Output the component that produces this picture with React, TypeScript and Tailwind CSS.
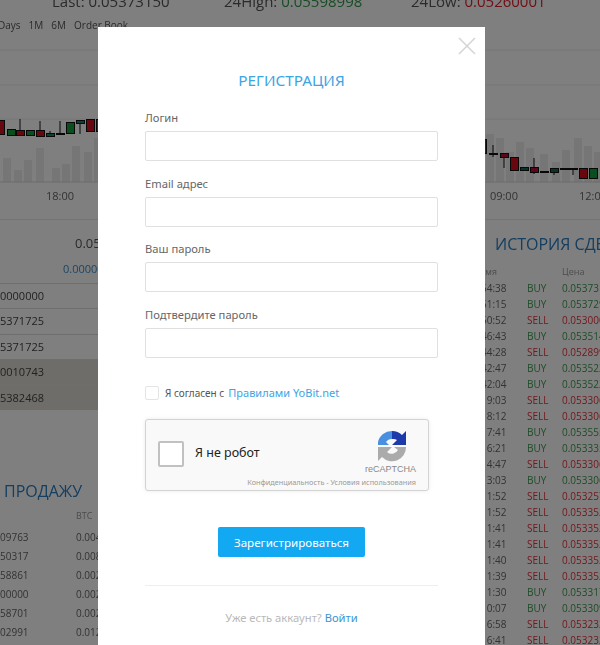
const bars = [
  [3, 24], [14, 12], [24, 22], [36, 34], [52, 14], [62, 18], [72, 36], [84, 30], [94, 44],
  [104, 60], [486, 48], [496, 44], [506, 30], [516, 40], [526, 34], [540, 28], [552, 20], [562, 32],
  [574, 44], [584, 36], [594, 30],
];

// x, top, bottom, colour, wick top, wick bottom
const candles: [number, number, number, string, number?, number?][] = [
  [-4, 120, 134, "#d0101c"], [7, 129, 135, "#149a3c"], [16, 130, 135, "#d0101c", 119, 135],
  [26, 130, 135, "#149a3c"], [36, 130, 136, "#d0101c", 121, 136], [46, 133, 136, "#0d8a6a", 131, 137],
  [56, 133, 134, "#111", 121, 134], [66, 122, 133, "#149a3c"], [76, 120, 123, "#0d8a6a", 120, 134],
  [86, 119, 131, "#d0101c"], [96, 119, 131, "#149a3c"],
  [478, 139, 153, "#d0101c"], [489, 153, 154, "#111", 145, 157], [500, 153, 157, "#b01030", 153, 168],
  [510, 157, 170, "#d0101c"], [520, 167, 170, "#0d6a50"], [530, 167, 172, "#b01030", 158, 174],
  [540, 171, 172, "#111"], [550, 168, 172, "#0d6a50", 168, 175], [560, 168, 169, "#111"],
  [569, 168, 169, "#111", 168, 175], [579, 168, 178, "#d0101c"], [589, 168, 178, "#149a3c"],
];

const leftRows = ["0000000", "5371725", "5371725", "0010743", "5382468"];

const sellRows = [
  ["09763", "0.004"], ["50317", "0.008"], ["58861", "0.002"],
  ["00000", "0.002"], ["58701", "0.002"], ["02991", "0.012"],
];

const trades = [
  ["54:38", "BUY", "0.053731"], ["51:15", "BUY", "0.053729"], ["50:52", "SELL", "0.053000"],
  ["46:43", "BUY", "0.053514"], ["44:28", "SELL", "0.052899"], ["42:47", "BUY", "0.053522"],
  ["42:04", "BUY", "0.053522"], ["19:03", "SELL", "0.053306"], ["18:12", "SELL", "0.053306"],
  ["17:41", "BUY", "0.053555"], ["16:21", "BUY", "0.053335"], ["14:47", "SELL", "0.053306"],
  ["13:03", "BUY", "0.053306"], ["11:52", "SELL", "0.053257"], ["11:52", "SELL", "0.053352"],
  ["11:41", "SELL", "0.053352"], ["11:41", "SELL", "0.053352"], ["11:40", "SELL", "0.053352"],
  ["11:39", "SELL", "0.053352"], ["11:30", "BUY", "0.053317"], ["10:07", "BUY", "0.053309"],
  ["16:58", "SELL", "0.053232"], ["16:41", "SELL", "0.053232"],
];

function Chart() {
  return (
    <svg width="600" height="149" viewBox="0 0 600 149" className="block">
      <g transform="translate(0,-36)">
        {[50, 85, 119].map((y) => (
          <line key={y} x1="0" x2="600" y1={y} y2={y} stroke="#ececec" />
        ))}
        {bars.map(([x, h]) => (
          <rect key={x} x={x} y={182 - h} width="8" height={h} fill="#ececec" />
        ))}
        <line x1="0" x2="600" y1="182" y2="182" stroke="#d8d8d8" />
        {candles.map(([x, top, bottom, fill, wickTop, wickBottom]) => (
          <g key={x}>
            {wickTop !== undefined && (
              <line x1={x + 4} x2={x + 4} y1={wickTop} y2={wickBottom} stroke="#111" />
            )}
            <rect x={x + 0.5} y={top + 0.5} width="8" height={bottom - top} fill={fill} stroke="#111" />
          </g>
        ))}
      </g>
    </svg>
  );
}

function Background() {
  return (
    <div className="font-['Open_Sans',sans-serif] text-[#444] blur-[0.7px]">
      <div className="-mt-[9px] flex h-[24px] pl-[52px] text-[15px] leading-[20px] text-[#555]">
        <div className="w-[172px] whitespace-nowrap">
          Last: <span className="text-[#555]">0.05373150</span>
        </div>
        <div className="w-[187px] whitespace-nowrap">
          24High: <span className="text-[#2f9a4a]">0.05598998</span>
        </div>
        <div className="whitespace-nowrap">
          24Low: <span className="text-[#e0202c]">0.05260001</span>
        </div>
      </div>
      <div className="-ml-[2px] flex h-[21px] items-center gap-[8px] pb-[1px] text-[10px] text-[#555]">
        <span>Days</span>
        <span>1M</span>
        <span>6M</span>
        <span>Order Book</span>
      </div>
      <Chart />
      <div className="flex h-[34px] justify-between pt-[3px] text-[11px] text-[#666]">
        <span className="ml-[46px]">18:00</span>
        <span className="ml-auto mr-[61px]">09:00</span>
        <span className="mr-[-7px]">12:00</span>
      </div>
      <div className="flex">
        <div className="w-[120px] shrink-0 overflow-hidden">
          <div className="border-t border-[#e8e8e8] pt-[14px] pl-[75px] text-[13px] leading-[18px] text-[#555]">0.05373</div>
          <div className="mt-[10px] h-[21px] pl-[63px] text-[11px] leading-[14px] text-[#3d8cc8]">0.00000</div>
          {leftRows.map((row, i) => (
            <div
              key={i}
              className={`flex h-[25.4px] items-center border-t border-[#dcdcdc] text-[11px] text-[#444] ${i > 2 ? "bg-[#dcdad2]" : ""}`}
            >
              {row}
            </div>
          ))}
          <div className="mt-[70px] whitespace-nowrap pl-[4px] text-[16px] leading-[22px] text-[#2b7cc0]">ПРОДАЖУ</div>
          <div className="mt-[7px] pl-[76px] text-[9px] leading-[14px] text-[#999]">BTC</div>
          <div className="mt-[5px]">
            {sellRows.map(([amount, total]) => (
              <div key={amount} className="flex h-[19px] items-center text-[10px] text-[#666]">
                <span className="w-[76px]">{amount}</span>
                <span>{total}</span>
              </div>
            ))}
          </div>
        </div>
        <div className="flex-1" />
        <div className="w-[128px] shrink-0 overflow-hidden">
          <div className="h-[43px] whitespace-nowrap border-t border-[#e8e8e8] pt-[13px] pl-[23px] text-[16px] leading-[22px] text-[#2b7cc0]">
            ИСТОРИЯ СДЕЛОК
          </div>
          <div className="-ml-[3px] flex h-[18px] items-center pt-[1px] text-[9px] text-[#999]">
            <span className="w-[93px] shrink-0">Время</span>
            <span>Цена</span>
          </div>
          {trades.map(([time, side, price], i) => (
            <div
              key={i}
              className={`flex h-[16px] items-center whitespace-nowrap text-[10px] ${side === "BUY" ? "text-[#3c9a4e]" : "text-[#e8303a]"}`}
            >
              <span className="w-[55px] shrink-0 pl-[9px] text-[#666]">{time}</span>
              <span className="w-[35px] shrink-0">{side}</span>
              <span className="shrink-0">{price}</span>
            </div>
          ))}
        </div>
      </div>
    </div>
  );
}

function RecaptchaLogo() {
  return (
    <svg width="30" height="32" viewBox="0 0 30 32" className="block">
      <path d="M1 12 A14 14 0 0 1 15 1 L15 9 A7 7 0 0 0 9 12 L12 15 L1 15 Z" fill="#4a90e2" />
      <path d="M15 1 A14 14 0 0 1 25 5 L29 1 L29 15 L15 15 L20 10 A7 7 0 0 0 15 9 Z" fill="#1c3aa9" />
      <path d="M1 17 L15 17 L10 22 A7 7 0 0 0 21 20 L17 17 L29 17 A14 14 0 0 1 5 27 L1 31 Z" fill="#ababab" />
    </svg>
  );
}

function Field({ label }: { label: string }) {
  return (
    <div className="h-[65.6px]">
      <label className="block h-[22px] text-[11.2px] leading-[18px] text-[#666]">{label}</label>
      <div className="h-[30px] rounded-[2px] border border-[#e0e0e0] bg-white" />
    </div>
  );
}

function Modal() {
  return (
    <div className="absolute left-[98px] top-[27px] h-[640px] w-[387px] bg-white px-[47px] font-['Noto_Sans',sans-serif]">
      <svg width="18" height="18" viewBox="0 0 18 18" className="absolute left-[360px] top-[10px]">
        <path d="M1 1 L17 17 M17 1 L1 17" stroke="#d4d4d4" strokeWidth="1.5" fill="none" />
      </svg>
      <h2 className="pt-[42px] text-center text-[15.3px] leading-[22px] text-[#3ca5e4]">РЕГИСТРАЦИЯ</h2>
      <div className="mt-[18px]">
        <Field label="Логин" />
        <Field label="Email адрес" />
        <Field label="Ваш пароль" />
        <Field label="Подтвердите пароль" />
      </div>
      <div className="mt-[15px] flex h-[14px] items-center">
        <span className="h-[14px] w-[14px] rounded-[2px] border border-[#e4e4e4]" />
        <span className="ml-[6px] text-[10px] text-[#555]">Я согласен с</span>
        <span className="ml-[4px] text-[11px] text-[#3ca5e4]">Правилами YoBit.net</span>
      </div>
      <div className="relative mt-[19px] h-[72px] w-[284px] rounded-[3px] border border-[#d3d3d3] bg-[#f9f9f9] shadow-[0_0_4px_rgba(0,0,0,0.08)]">
        <span className="absolute left-[12px] top-[21px] h-[26px] w-[26px] rounded-[2px] border-2 border-[#c1c1c1] bg-white" />
        <span className="absolute left-[49px] top-[24px] text-[12.5px] leading-[18px] text-[#222]">Я не робот</span>
        <div className="absolute left-[231px] top-[10px]">
          <RecaptchaLogo />
        </div>
        <span className="absolute right-[12px] top-[42px] font-['Liberation_Sans',sans-serif] text-[9px] leading-[14px] text-[#888]">reCAPTCHA</span>
        <span className="absolute right-[12px] top-[56px] whitespace-nowrap text-[7.3px] leading-[12px] text-[#999]">
          Конфиденциальность - Условия использования
        </span>
      </div>
      <div className="mt-[36px] flex justify-center">
        <button className="h-[30px] w-[147px] rounded-[2px] bg-[#12a9f2] text-[11.6px] text-white">Зарегистрироваться</button>
      </div>
      <div className="mt-[28px] border-t border-[#eeeeee] pt-[23px] text-center text-[11.2px] leading-[18px] text-[#b9b9b9]">
        Уже есть аккаунт? <span className="text-[#3c94d0]">Войти</span>
      </div>
    </div>
  );
}

export default function App() {
  return (
    <div className="relative h-[645px] w-[600px] overflow-hidden bg-white">
      <Background />
      <div className="absolute inset-0 bg-black/50" />
      <Modal />
    </div>
  );
}
